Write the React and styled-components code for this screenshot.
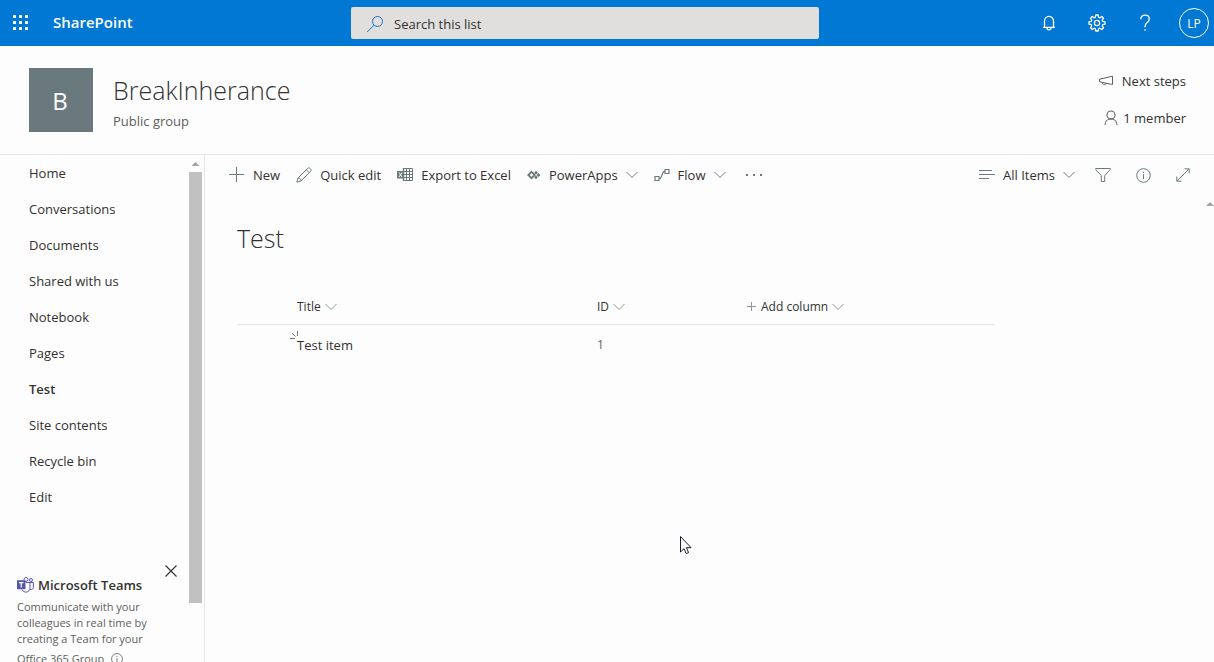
import { useState } from "react";
import styled, { createGlobalStyle, css } from "styled-components";

const GlobalStyle = createGlobalStyle`
    * {
        box-sizing: border-box;
    }
    body {
        margin: 0;
        background-color: #fdfdfd;
        color: #323130;
        font-family: 'Open Sans', 'Noto Sans', sans-serif;
        font-size: 13px;
        line-height: 20px;
    }
    button, input {
        font: inherit;
        color: inherit;
    }
`

const Page = styled.div`
    height: 100vh;
    overflow: hidden;
    display: flex;
    flex-direction: column;
`
const Svg = styled.svg`
    flex: none;
    display: block;
    fill: none;
    stroke: currentColor;
`
const PlainBtn = styled.button`
    border: none;
    padding: 0;
    background: none;
    cursor: pointer;
    display: flex;
    align-items: center;
    white-space: nowrap;
`

const SuiteBar = styled.header`
    flex: none;
    height: 46px;
    display: grid;
    grid-template-columns: 1fr minmax(200px, 468px) 1fr;
    align-items: center;
    background-color: #0078d4;
    color: white;
`
const SuiteLeft = styled.div`
    display: flex;
    align-items: center;
    gap: 24px;
    padding-left: 13px;
`
const SuiteName = styled.a`
    color: white;
    padding-bottom: 2px;
    font-size: 15px;
    font-weight: 600;
    text-decoration: none;
`
const SearchBox = styled.label`
    height: 32px;
    display: flex;
    align-items: center;
    gap: 10px;
    padding: 2px 15px 0;
    margin-left: -22px;
    margin-right: 22px;
    border-radius: 2px;
    background-color: #e1dfdd;
    color: #1b75c4;
`
const SearchInput = styled.input`
    flex: 1;
    min-width: 0;
    border: none;
    padding: 0;
    outline: none;
    background: none;
    color: #323130;
    &::placeholder {
        color: #323130;
        opacity: 1;
    }
`
const SuiteRight = styled.div`
    display: flex;
    align-items: center;
    justify-content: flex-end;
    padding-right: 5px;
`
const SuiteBtn = styled(PlainBtn)`
    width: 48px;
    height: 46px;
    justify-content: center;
`
const Avatar = styled(PlainBtn)`
    width: 30px;
    height: 30px;
    justify-content: center;
    border: 1px solid white;
    border-radius: 50%;
    font-size: 12px;
    padding-top: 1px;
    margin-left: 10px;
`

const SiteHeader = styled.section`
    flex: none;
    height: 109px;
    display: flex;
    justify-content: space-between;
    padding: 22px 28px 0 29px;
    border-bottom: 1px solid #e6e6e6;
`
const SiteInfo = styled.div`
    display: flex;
    gap: 20px;
`
const SiteLogo = styled.div`
    width: 64px;
    height: 64px;
    display: flex;
    align-items: center;
    justify-content: center;
    padding: 2px 2px 0 0;
    background-color: #69797e;
    color: white;
    font-size: 24px;
`
const SiteTitle = styled.h1`
    margin: 4px 0 3px;
    font-size: 25px;
    font-weight: 300;
    line-height: 36px;
`
const SiteKind = styled.div`
    color: #605e5c;
`
const SiteActions = styled.div`
    display: flex;
    flex-direction: column;
    align-items: flex-end;
    gap: 17px;
    padding-top: 3px;
`
const SiteAction = styled(PlainBtn)`
    gap: ${props => props.$gap};
    svg {
        color: #605e5c;
    }
`

const Body = styled.div`
    flex: 1;
    min-height: 0;
    display: flex;
`
const Sidebar = styled.aside`
    flex: none;
    width: 205px;
    display: flex;
    overflow: hidden;
    border-right: 1px solid #e6e6e6;
`
const SideContent = styled.div`
    flex: 1;
    min-width: 0;
`
const NavLink = styled.a`
    height: 36px;
    display: flex;
    align-items: center;
    padding-left: 29px;
    color: #323130;
    text-decoration: none;
    ${props => props.$active && css`font-weight: 600;`}
`
const Scrollbar = styled.div`
    width: 13px;
    margin-right: 2px;
    display: flex;
    flex-direction: column;
    align-items: center;
`
const ArrowUp = styled.div`
    flex: none;
    width: 8px;
    height: 4px;
    margin: ${props => props.$margin};
    background-color: #a3a3a3;
    clip-path: polygon(50% 0, 100% 100%, 0 100%);
`
const Thumb = styled.div`
    width: 100%;
    height: 85%;
    background-color: #c1c1c1;
`

const TeamsCard = styled.section`
    padding: 50px 16px 0 17px;
    position: relative;
    color: #605e5c;
    font-size: 11px;
    line-height: 16px;
`
const TeamsClose = styled(PlainBtn)`
    position: absolute;
    top: 50px;
    right: 12px;
    color: #323130;
`
const TeamsTitle = styled.h2`
    display: flex;
    align-items: center;
    gap: 4px;
    margin: 10px 0 4px;
    font-size: 13px;
    font-weight: 600;
    line-height: 20px;
    color: #323130;
    white-space: nowrap;
`
const TeamsText = styled.p`
    margin: 0;
`
const TeamsLast = styled.div`
    height: 24px;
    display: flex;
    align-items: center;
    gap: 7px;
`

const Main = styled.main`
    flex: 1;
    min-width: 0;
`
const CommandBar = styled.div`
    height: 40px;
    display: flex;
    align-items: center;
    justify-content: space-between;
    padding: 0 11px 0 24px;
`
const CommandGroup = styled.div`
    display: flex;
    align-items: center;
    gap: ${props => props.$gap};
`
const Command = styled(PlainBtn)`
    gap: 8px;
    height: 40px;
    svg {
        color: #69797e;
    }
`
const IconCommand = styled(Command)`
    width: ${props => props.$narrow ? '24px' : '40px'};
    justify-content: center;
`
const ListArea = styled.div`
    display: flex;
    justify-content: space-between;
`
const ListContent = styled.div`
    flex: 1;
    padding: 23px 0 0 32px;
`
const ListTitle = styled.h2`
    margin: 0;
    font-size: 25px;
    font-weight: 300;
    line-height: 40px;
`
const Table = styled.table`
    width: 100%;
    max-width: 758px;
    margin-top: 33px;
    table-layout: fixed;
    border-collapse: collapse;
`
const Th = styled.th`
    width: ${props => props.$width};
    height: 33px;
    padding: 0;
    border-bottom: 1px solid #e6e6e6;
    font-weight: 400;
    text-align: left;
`
const HeadBtn = styled(PlainBtn)`
    gap: 4px;
    font-size: 12px;
    svg {
        color: #8a9a8a;
    }
`
const Td = styled.td`
    height: 42px;
    padding: 0;
    color: ${props => props.$muted ? '#605e5c' : '#323130'};
    font-size: ${props => props.$muted ? '12px' : '13px'};
`
const ItemName = styled.a`
    position: relative;
    color: inherit;
    text-decoration: none;
    svg {
        position: absolute;
        top: -5px;
        left: -7px;
        color: #69797e;
    }
`
const Pointer = styled(Svg)`
    position: fixed;
    left: 679px;
    top: 535px;
    pointer-events: none;
`

const navItems = ['Home', 'Conversations', 'Documents', 'Shared with us', 'Notebook', 'Pages', 'Test', 'Site contents', 'Recycle bin', 'Edit'];

function WaffleIcon () {
    return(
        <Svg width="16" height="16">
            {[0, 6, 12].map(y => [0, 6, 12].map(x => (
                <rect key={`${x}-${y}`} x={x} y={y} width="3" height="3" rx="0.5" fill="white" stroke="none"/>
            )))}
        </Svg>
    )
}
const SearchIcon = () => (
    <Svg width="18" height="18" viewBox="0 0 18 18">
        <circle cx="11.5" cy="6.5" r="5"/>
        <path d="M8 10.2L1.2 17"/>
    </Svg>
)
const BellIcon = () => (
    <Svg width="16" height="18" viewBox="0 0 16 18" strokeWidth="1.3">
        <path d="M3.5 13V7.2a4.5 4.8 0 0 1 9 0V13M2 13.4h12M6 13.8a2 2 0 0 0 4 0"/>
    </Svg>
)
const GearIcon = () => (
    <Svg width="18" height="18" viewBox="0 0 18 18" strokeWidth="1.3">
        <path d="M7.8 1h2.4l.4 2.2 1.3.6 1.9-1.3 1.7 1.7-1.3 1.9.6 1.3 2.2.4v2.4l-2.2.4-.6 1.3 1.3 1.9-1.7 1.7-1.9-1.3-1.3.6-.4 2.2H7.8l-.4-2.2-1.3-.6-1.9 1.3-1.7-1.7 1.3-1.9-.6-1.3L1 10.2V7.8l2.2-.4.6-1.3-1.3-1.9 1.7-1.7 1.9 1.3 1.3-.6z" strokeLinejoin="round"/>
        <circle cx="9" cy="9" r="2.6"/>
    </Svg>
)
const HelpIcon = () => (
    <Svg width="12" height="18" viewBox="0 0 12 18" strokeWidth="1.3">
        <path d="M1.8 5.2C1.8 2.7 3.5 1.2 6 1.2s4.3 1.4 4.3 3.8c0 3.4-4.3 3.7-4.3 7.4v.8M6 15.2v1.6"/>
    </Svg>
)
const MegaphoneIcon = () => (
    <Svg width="16" height="12" viewBox="0 0 16 12">
        <path d="M1.5 4.2L14.5 1.2v8.3L1.5 6.8zM4.2 7.5c0 2.6 3.6 2.8 4 .8"/>
    </Svg>
)
const PersonIcon = () => (
    <Svg width="14" height="16" viewBox="0 0 14 16" strokeWidth="1.1">
        <circle cx="7" cy="5" r="4"/>
        <path d="M1 15c0-3.6 2.6-6 6-6s6 2.4 6 6"/>
    </Svg>
)
const PlusIcon = ({ size = 16 }) => (
    <Svg width={size} height={size} viewBox={`0 0 ${size} ${size}`}>
        <path d={`M${size / 2 - 0.5} 0v${size - 1}M0 ${size / 2 - 0.5}h${size - 1}`}/>
    </Svg>
)
const PencilIcon = () => (
    <Svg width="16" height="16" viewBox="0 0 16 16" strokeLinejoin="round">
        <path d="M.8 15.2L2 11 11.8 1.2c1.6-1.2 4.2 1.2 2.9 3L5 14zM10.3 2.7l3 3M2 11c1.8 0 3 1.2 3 3"/>
    </Svg>
)
const ExcelIcon = () => (
    <Svg width="16" height="16" viewBox="0 0 16 16">
        <path d="M6 1.5h9.500v12H6M6 4.500h9.500M6 7.500h9.500M6 10.500h9.500M9.500 1.500v12M12.500 1.500v12"/>
        <path d="M6.500 1v13" strokeWidth="1.4"/>
        <path d="M0 4h7v7.500H0z" fill="currentColor" stroke="none"/>
        <path d="M2 5.500l3 4.500M5 5.500L2 10" stroke="white"/>
    </Svg>
)
const PowerAppsIcon = () => (
    <Svg width="14" height="10" viewBox="0 0 14 10" strokeWidth="1.8">
        <path d="M4.5 1.8L7.7 5 4.5 8.2 1.3 5z"/>
        <path d="M9 .8l1.9 1.9L9 4.6 7.1 2.7zM9 5.4l1.9 1.9L9 9.2 7.1 7.3zM11.500 3l2 2-2 2-2-2z" fill="currentColor" stroke="none"/>
    </Svg>
)
const FlowIcon = () => (
    <Svg width="16" height="14" viewBox="0 0 16 14">
        <path d="M1 8.5h4v4H1zM11 1.5h4v4h-4zM5 10.5h1.5l3-7H11" strokeWidth="1.2"/>
    </Svg>
)
const ChevronIcon = () => (
    <Svg width="12" height="8" viewBox="0 0 12 8">
        <path d="M.5 1L6 6.5 11.5 1"/>
    </Svg>
)
const MoreIcon = () => (
    <Svg width="16" height="4" viewBox="0 0 16 4">
        <path d="M0 1h2v2H0zM7 1h2v2H7zM14 1h2v2h-2z" fill="currentColor" stroke="none"/>
    </Svg>
)
const ListIcon = () => (
    <Svg width="16" height="12" viewBox="0 0 16 12">
        <path d="M0 1.5h13M0 5.5h16M0 9.5h10"/>
    </Svg>
)
const FilterIcon = () => (
    <Svg width="16" height="16" viewBox="0 0 16 16">
        <path d="M.8 1.5h14.4v1.3L9.7 8.5v6H6.3v-6L.8 2.8z"/>
    </Svg>
)
const InfoIcon = ({ size = 15 }) => (
    <Svg width={size} height={size} viewBox="0 0 15 15">
        <circle cx="7.5" cy="7.5" r="6.8"/>
        <path d="M7.5 6.2v5M7.5 3.7v1.3"/>
    </Svg>
)
const ExpandIcon = () => (
    <Svg width="14" height="14" viewBox="0 0 14 14">
        <path d="M1 13L13 1M8.5.8h4.7v4.7M.8 8.5v4.7h4.7"/>
    </Svg>
)
const CloseIcon = () => (
    <Svg width="12" height="12" viewBox="0 0 12 12" strokeWidth="1.1">
        <path d="M.5.5l11 11M11.5.5l-11 11"/>
    </Svg>
)
const TeamsIcon = () => (
    <Svg width="17" height="16" viewBox="0 0 17 16" color="#5558af">
        <circle cx="9" cy="2.5" r="2"/>
        <circle cx="14" cy="3" r="1.5"/>
        <path d="M9 5.5h4v5.2c0 5.2-6.5 5.8-8 1.8M13 5.5h3.4v4.7c0 1.8-1.5 2.8-3.4 2.3"/>
        <path d="M0 3.2h8.5v9H0z" fill="currentColor" stroke="none"/>
        <path d="M2 5.7h4.500M4.250 5.700v4.800" stroke="white" strokeWidth="1.2"/>
    </Svg>
)
const SparkIcon = () => (
    <Svg width="9" height="9" viewBox="0 0 9 9">
        <path d="M0 7.5h5M2 2l3.5 3.5M7.5 0v5"/>
    </Svg>
)

function App () {
    const [search, setSearch] = useState('');
    const [showTeams, setShowTeams] = useState(true);

    return(
        <Page>
            <GlobalStyle/>
            <SuiteBar>
                <SuiteLeft>
                    <PlainBtn aria-label="App launcher"><WaffleIcon/></PlainBtn>
                    <SuiteName href="#">SharePoint</SuiteName>
                </SuiteLeft>
                <SearchBox>
                    <SearchIcon/>
                    <SearchInput
                    type="text"
                    aria-label="Search this list"
                    placeholder="Search this list"
                    value={search}
                    onChange={e => setSearch(e.target.value)}/>
                </SearchBox>
                <SuiteRight>
                    <SuiteBtn aria-label="Notifications"><BellIcon/></SuiteBtn>
                    <SuiteBtn aria-label="Settings"><GearIcon/></SuiteBtn>
                    <SuiteBtn aria-label="Help"><HelpIcon/></SuiteBtn>
                    <Avatar>LP</Avatar>
                </SuiteRight>
            </SuiteBar>

            <SiteHeader>
                <SiteInfo>
                    <SiteLogo>B</SiteLogo>
                    <div>
                        <SiteTitle>BreakInherance</SiteTitle>
                        <SiteKind>Public group</SiteKind>
                    </div>
                </SiteInfo>
                <SiteActions>
                    <SiteAction $gap="8px"><MegaphoneIcon/>Next steps</SiteAction>
                    <SiteAction $gap="5px"><PersonIcon/>1 member</SiteAction>
                </SiteActions>
            </SiteHeader>

            <Body>
                <Sidebar>
                    <SideContent>
                        <nav>
                            {navItems.map(item => (
                                <NavLink key={item} href="#" $active={item === 'Test'}>{item}</NavLink>
                            ))}
                        </nav>
                        {showTeams &&
                        <TeamsCard>
                            <TeamsClose aria-label="Close" onClick={() => setShowTeams(false)}><CloseIcon/></TeamsClose>
                            <TeamsTitle><TeamsIcon/>Microsoft Teams</TeamsTitle>
                            <TeamsText>Communicate with your<br/>colleagues in real time by<br/>creating a Team for your</TeamsText>
                            <TeamsLast>Office 365 Group <InfoIcon size={12}/></TeamsLast>
                        </TeamsCard>
                        }
                    </SideContent>
                    <Scrollbar>
                        <ArrowUp $margin="7px 0 6px"/>
                        <Thumb/>
                    </Scrollbar>
                </Sidebar>

                <Main>
                    <CommandBar>
                        <CommandGroup $gap="16px">
                            <Command><PlusIcon/>New</Command>
                            <Command><PencilIcon/>Quick edit</Command>
                            <Command><ExcelIcon/>Export to Excel</Command>
                            <Command><PowerAppsIcon/>PowerApps<ChevronIcon/></Command>
                            <Command><FlowIcon/>Flow<ChevronIcon/></Command>
                            <IconCommand $narrow aria-label="More"><MoreIcon/></IconCommand>
                        </CommandGroup>
                        <CommandGroup $gap="8px">
                            <Command><ListIcon/>All Items<ChevronIcon/></Command>
                            <CommandGroup $gap="0">
                                <IconCommand aria-label="Filter"><FilterIcon/></IconCommand>
                                <IconCommand aria-label="Details"><InfoIcon/></IconCommand>
                                <IconCommand aria-label="Expand"><ExpandIcon/></IconCommand>
                            </CommandGroup>
                        </CommandGroup>
                    </CommandBar>
                    <ListArea>
                        <ListContent>
                            <ListTitle>Test</ListTitle>
                            <Table>
                                <thead>
                                    <tr>
                                        <Th $width="60px"/>
                                        <Th $width="300px"><HeadBtn>Title<ChevronIcon/></HeadBtn></Th>
                                        <Th $width="150px"><HeadBtn>ID<ChevronIcon/></HeadBtn></Th>
                                        <Th><HeadBtn><PlusIcon size={10}/>Add column<ChevronIcon/></HeadBtn></Th>
                                    </tr>
                                </thead>
                                <tbody>
                                    <tr>
                                        <Td/>
                                        <Td><ItemName href="#"><SparkIcon/>Test item</ItemName></Td>
                                        <Td $muted>1</Td>
                                        <Td/>
                                    </tr>
                                </tbody>
                            </Table>
                        </ListContent>
                        <ArrowUp $margin="7px 0 0"/>
                    </ListArea>
                </Main>
            </Body>
            <Pointer width="13" height="20" viewBox="0 0 13 20">
                <path d="M1.5 1.5v15.5l3.5-3.4 2.2 5 2.4-1-2.2-4.9h4.7z" fill="white" stroke="#1b1b2b"/>
            </Pointer>
        </Page>
    )
}
export default App;
